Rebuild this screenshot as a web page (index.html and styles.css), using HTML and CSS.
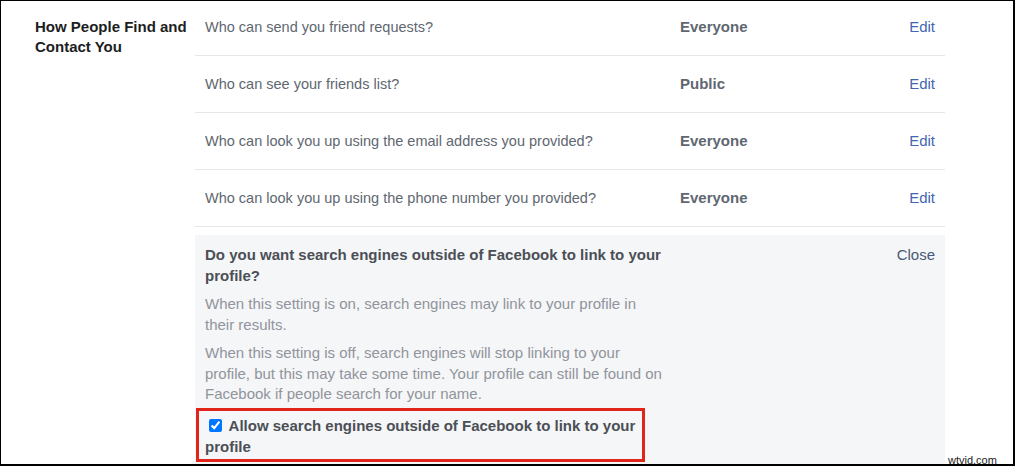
FILE: index.html
```html
<!DOCTYPE html>
<html lang="en">
  <head>
    <meta charset="UTF-8" />
    <title>Privacy Settings</title>
    <link rel="stylesheet" href="styles.css">
  </head>
  <body>
    <div class="frame">
      <section class="section">
        <h3 class="section-title">How People Find and Contact You</h3>

        <div class="settings">
          <div class="row">
            <span class="question">Who can send you friend requests?</span>
            <span class="value">Everyone</span>
            <a class="action" href="#">Edit</a>
          </div>
          <div class="row">
            <span class="question">Who can see your friends list?</span>
            <span class="value">Public</span>
            <a class="action" href="#">Edit</a>
          </div>
          <div class="row">
            <span class="question">Who can look you up using the email address you provided?</span>
            <span class="value">Everyone</span>
            <a class="action" href="#">Edit</a>
          </div>
          <div class="row">
            <span class="question">Who can look you up using the phone number you provided?</span>
            <span class="value">Everyone</span>
            <a class="action" href="#">Edit</a>
          </div>

          <!-- Bloco aberto -->
          <div class="expanded">
            <div class="expanded-body">
              <h4>Do you want search engines outside of Facebook to link to your profile?</h4>
              <p>When this setting is on, search engines may link to your profile in their results.</p>
              <p>When this setting is off, search engines will stop linking to your profile, but this may take some time. Your profile can still be found on Facebook if people search for your name.</p>
              <label class="allow">
                <input type="checkbox" checked>
                Allow search engines outside of Facebook to link to your profile
              </label>
            </div>
            <a class="close" href="#">Close</a>
          </div>
        </div>
      </section>

      <span class="watermark">wtvid.com</span>
    </div>
  </body>
</html>
```

FILE: styles.css
```css
* {
  margin: 0;
  padding: 0;
  box-sizing: border-box;
}

body {
  font-family: "Liberation Sans", Arial, sans-serif;
  font-size: 15px;
  background-color: #fff;
}

.frame {
  position: relative;
  width: 1015px;
  height: 466px;
  border: 1px solid #000;
  border-width: 1px 2px 2px 1px;
  overflow: hidden;
}

.section {
  display: flex;
  margin-top: -2px;
}

.section-title {
  width: 194px;
  padding: 18px 8px 0 34px;
  font-size: 15px;
  line-height: 20px;
  color: #1c1e21;
}

.settings {
  width: 750px;
}

/* Linhas de configuracao */
.row {
  display: grid;
  grid-template-columns: 475px 1fr auto;
  align-items: center;
  height: 57px;
  padding: 0 10px 1px;
  border-bottom: 1px solid #e5e6e9;
}

.question {
  font-size: 14.5px;
  color: #606770;
}

.value {
  font-weight: bold;
  color: #606770;
}

.action {
  color: #4267b2;
  text-decoration: none;
}

/* Bloco expandido */
.expanded {
  display: flex;
  justify-content: space-between;
  margin-top: 8px;
  padding: 9px 10px 0;
  background-color: #f5f6f7;
  height: 240px;
}

.expanded-body {
  width: 460px;
}

.expanded h4 {
  font-size: 15px;
  line-height: 21px;
  color: #4b4f56;
}

.expanded p {
  margin-top: 8px;
  line-height: 20.5px;
  color: #90949c;
}

.allow {
  display: block;
  width: 449px;
  margin: 3px 0 0 -9px;
  padding: 4px 6px 2px;
  border: 3px solid #e1251b;
  font-weight: bold;
  line-height: 21px;
  color: #4b4f56;
}

.allow input {
  margin: 0 3px 0 4px;
  vertical-align: -1px;
}

.close {
  color: #485a77;
  line-height: 21px;
  text-decoration: none;
}

.watermark {
  position: absolute;
  left: 947px;
  bottom: -2px;
  font-size: 11px;
  color: #222;
}
```
